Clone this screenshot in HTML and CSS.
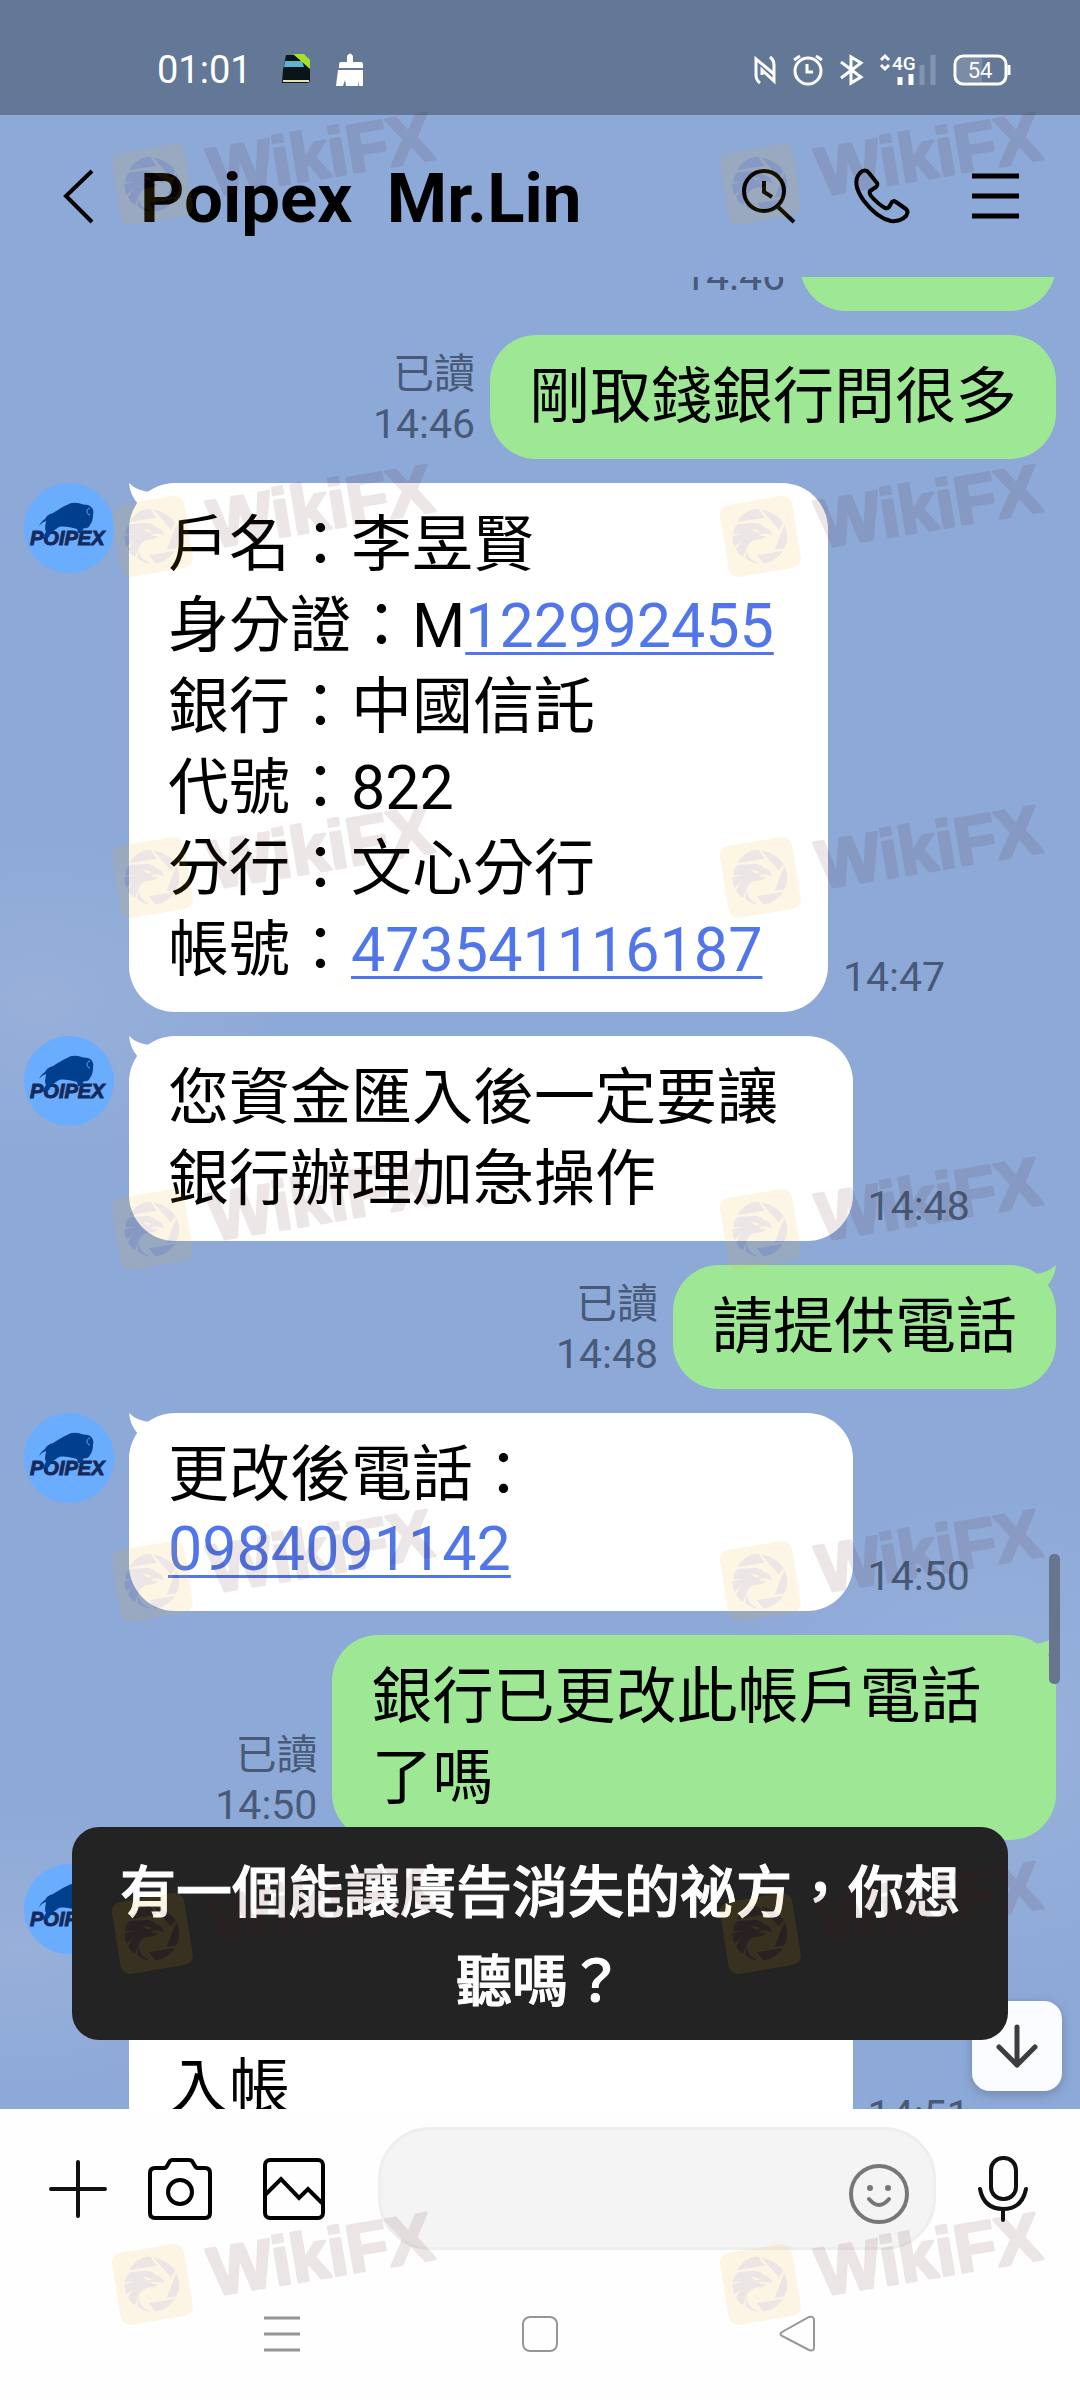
FILE: index.html
```html
<!DOCTYPE html>
<html lang="zh-Hant">
<head>
<meta charset="utf-8">
<meta name="viewport" content="width=device-width, initial-scale=1">
<title>Poipex Mr.Lin</title>
<link rel="stylesheet" href="styles.css">
</head>
<body>
<svg class="defs" aria-hidden="true">
  <defs>
    <symbol id="avatar" viewBox="0 0 90 90">
      <circle cx="45" cy="45" r="45" fill="#6aadff"/>
      <text x="6" y="62" class="avatar-name">POIPEX</text>
      <path fill="#003f8d" d="M15 43C17 39 19 37 21 36C23 32 26 31 29 30C34 27 38 24 43 22Q47 19 54 20Q60 22 64 22C69 24 70 28 69 32Q69 38 66 42Q64 46 60 45Q58 47 59 50L54 50L53 46C46 44 40 43 35 44C32 46 29 48 27 50L25 54L18 56L22 49C20 45 22 41 22 38Q18 39 15 43Z"/>
      <path fill="none" stroke="#6aadff" stroke-width="1" d="M66 25C62 26 62 31 66 32"/>
    </symbol>
    <symbol id="tail" viewBox="0 0 26 26">
      <path d="M0 0Q8 8 21 9L26 26L9 21Q1 12 0 0Z" fill="currentColor"/>
    </symbol>
    <g id="mark">
      <g transform="scale(.3444 .3333)">
        <path d="M353 517L507 490L532 650L378 677Z" fill="#faaf05" stroke="#faaf05" stroke-width="56" stroke-linejoin="round"/>
        <g fill="#501914">
          <path d="M375 541C390 512 420 498 437 501L455 527Z"/>
          <path d="M445 502C475 508 500 526 509 543L497 563Z"/>
          <path d="M512 548C525 575 522 602 511 620L484 623Z"/>
          <path d="M433 640L508 626C495 648 472 663 450 664Z"/>
          <path d="M364 577C364 562 370 550 380 546L425 542C440 543 447 548 451 554C466 557 476 568 476 580C462 573 455 577 445 575L438 579C446 582 454 582 459 583L447 592C425 590 405 602 402 622C404 645 422 660 440 665C423 664 410 658 399 648L402 618L392 646C382 640 376 632 372 622L386 598L367 614C362 600 361 590 362 582L390 576Z"/>
        </g>
        <path d="M417 560L440 566C434 574 424 571 417 560Z" fill="#faaf05"/>
      </g>
      <text transform="translate(213 206) rotate(-9.5)" class="mark-text">WikiFX</text>
    </g>
  </defs>
</svg>

<div class="phone">
  <div class="status">
    <span class="clock">01:01</span>
    <svg class="note" width="30" height="32" viewBox="0 0 30 32" aria-hidden="true">
      <path d="M4 1H22L28 8V27L26 29H0L1 16Z" fill="#0b1519"/>
      <path d="M3 7H20L22 13H2Z" fill="#5ab4d2"/>
      <path d="M11 0H22L28 6V15Z" fill="#a4e02c"/>
      <path d="M1 27H27" stroke="#e9dfb8" stroke-width="2"/>
    </svg>
    <svg width="28" height="34" viewBox="0 0 28 34" aria-hidden="true">
      <path fill="#fff" d="M11 3Q14 -2 17 3V9H25Q27 9 27 12V15H3V11Q3 9 5 9H11ZM2 17H27V33H23L22 28V33H10L9 27L7 33H0Z"/>
    </svg>
    <div class="status-right">
      <svg width="22" height="30" viewBox="0 0 22 30" fill="none" stroke="#fff" stroke-width="3" aria-hidden="true"><path d="M6 28Q2 25 2 20V4L20 19M16 2Q20 5 20 10V26L8 15V20"/></svg>
      <svg width="30" height="32" viewBox="0 0 30 32" fill="none" stroke="#fff" stroke-width="3" aria-hidden="true"><circle cx="15" cy="17" r="13"/><path d="M1 6L7 2M23 2L29 6M14 10V18H20"/></svg>
      <svg width="23" height="30" viewBox="0 0 23 30" fill="none" stroke="#fff" stroke-width="3" aria-hidden="true"><path d="M1 7L21 22L11 28V2L21 8L1 23"/></svg>
      <svg width="56" height="32" viewBox="0 0 56 32" aria-hidden="true">
        <path d="M1 6L5 2L9 6M1 11L5 15L9 11" fill="none" stroke="#fff" stroke-width="3"/>
        <text x="12" y="16" class="net">4G</text>
        <path d="M20 23V31M31 20V31" stroke="#fff" stroke-width="5"/>
        <path d="M42 11V31M53 1V31" stroke="#8495b0" stroke-width="5"/>
      </svg>
      <svg width="58" height="32" viewBox="0 0 58 32" aria-hidden="true">
        <rect x="4" y="4" width="25" height="24" fill="#7b8ca7"/>
        <rect x="2" y="2" width="51" height="28" rx="8" fill="none" stroke="#fff" stroke-width="3"/>
        <path d="M56 11V21" stroke="#fff" stroke-width="3"/>
        <text x="27" y="24" text-anchor="middle" class="charge">54</text>
      </svg>
    </div>
  </div>

  <header class="header">
    <button class="back" aria-label="返回"><svg width="60" height="60" viewBox="0 0 60 60" fill="none" stroke="#000" stroke-width="4"><path d="M44 5L18 30L44 56"/></svg></button>
    <h1 class="title">Poipex&nbsp; Mr.Lin</h1>
    <button aria-label="搜尋"><svg width="60" height="60" viewBox="0 0 60 60" fill="none" stroke="#000" stroke-width="4"><circle cx="26" cy="25" r="20"/><path d="M39 40L56 56M26 15V26L34 31"/></svg></button>
    <button aria-label="通話"><svg width="60" height="60" viewBox="0 0 60 60" fill="none" stroke="#000" stroke-width="4" stroke-linejoin="round"><path d="M8 7Q13 2 17 7L25 17Q26 19 24 21L18 25Q17 27 19 30Q26 38 33 42Q35 43 37 41L40 36Q42 34 44 36L54 43Q57 46 54 50Q48 56 39 55Q25 52 12 35Q-1 17 8 7Z"/></svg></button>
    <button aria-label="選單"><svg width="60" height="60" viewBox="0 0 60 60" stroke="#000" stroke-width="5"><path d="M6 10H53M6 30H53M6 50H53"/></svg></button>
  </header>

  <main class="chat">
    <div class="messages">
      <div class="msg sent">
        <div class="bubble stub"></div>
        <div class="meta"><time>14:46</time></div>
      </div>
      <div class="msg sent">
        <div class="bubble">剛取錢銀行問很多</div>
        <div class="meta"><span>已讀</span><time>14:46</time></div>
      </div>
      <div class="msg">
        <svg class="avatar" role="img" aria-label="Poipex"><use href="#avatar"/></svg>
        <div class="bubble"><svg class="tail" aria-hidden="true"><use href="#tail"/></svg>戶名：李昱賢<br>身分證：M<a href="tel:122992455">122992455</a>&nbsp;<br>銀行：中國信託<br>代號：822<br>分行：文心分行<br>帳號：<a href="tel:473541116187">473541116187</a></div>
        <div class="meta"><time>14:47</time></div>
      </div>
      <div class="msg">
        <svg class="avatar" role="img" aria-label="Poipex"><use href="#avatar"/></svg>
        <div class="bubble"><svg class="tail" aria-hidden="true"><use href="#tail"/></svg>您資金匯入後一定要讓銀行辦理加急操作</div>
        <div class="meta"><time>14:48</time></div>
      </div>
      <div class="msg sent">
        <div class="bubble"><svg class="tail" aria-hidden="true"><use href="#tail"/></svg>請提供電話</div>
        <div class="meta"><span>已讀</span><time>14:48</time></div>
      </div>
      <div class="msg">
        <svg class="avatar" role="img" aria-label="Poipex"><use href="#avatar"/></svg>
        <div class="bubble wide"><svg class="tail" aria-hidden="true"><use href="#tail"/></svg>更改後電話：<div class="number"><a href="tel:0984091142">0984091142</a></div></div>
        <div class="meta"><time>14:50</time></div>
      </div>
      <div class="msg sent">
        <div class="bubble"><svg class="tail" aria-hidden="true"><use href="#tail"/></svg>銀行已更改此帳戶電話了嗎</div>
        <div class="meta"><span>已讀</span><time>14:50</time></div>
      </div>
      <div class="msg">
        <svg class="avatar" role="img" aria-label="Poipex"><use href="#avatar"/></svg>
        <div class="bubble wide"><br><br>入帳</div>
        <div class="meta"><time>14:51</time></div>
      </div>
    </div>
    <div class="scrollbar"></div>
    <button class="jump" aria-label="跳至最新訊息"><svg width="60" height="60" viewBox="0 0 60 60" fill="none" stroke="#3d3d3d" stroke-width="5" stroke-linecap="round" stroke-linejoin="round"><path d="M30 11V49M12 31L30 49L48 31"/></svg></button>
    <div class="toast" role="status">有一個能讓廣告消失的祕方，你想聽嗎？</div>
  </main>

  <form class="composer">
    <button type="button" aria-label="更多"><svg width="72" height="72" viewBox="0 0 72 72" stroke="#111" stroke-width="4" stroke-linecap="round"><path d="M9 36H63M36 9V63"/></svg></button>
    <button type="button" aria-label="相機"><svg width="72" height="72" viewBox="0 0 72 72" fill="none" stroke="#000" stroke-width="4"><path d="M5 15H14Q16 15 17 13L20 8Q21 7 22 7H39Q41 7 42 8L45 13Q46 15 48 15H55Q60 15 60 20V60Q60 65 55 65H5Q0 65 0 60V20Q0 15 5 15Z"/><circle cx="30" cy="39" r="12"/></svg></button>
    <button type="button" aria-label="相片"><svg width="72" height="72" viewBox="0 0 72 72" fill="none" stroke="#000" stroke-width="4"><rect x="7" y="7" width="58" height="58" rx="5"/><path d="M7 42L23 26L41 45L50 36L65 51"/></svg></button>
    <div class="field">
      <input type="text" aria-label="輸入訊息">
      <button type="button" aria-label="貼圖"><svg width="60" height="72" viewBox="0 0 60 72"><circle cx="30" cy="41" r="28" fill="none" stroke="#777" stroke-width="4"/><circle cx="21" cy="35" r="3" fill="#777"/><circle cx="39" cy="35" r="3" fill="#777"/><path d="M20 46Q30 58 40 46" fill="none" stroke="#777" stroke-width="4" stroke-linecap="round"/></svg></button>
    </div>
    <button type="button" aria-label="語音"><svg width="72" height="72" viewBox="0 0 72 72" fill="none" stroke="#111" stroke-width="4" stroke-linecap="round"><rect x="23" y="5" width="25" height="41" rx="12"/><path d="M12 36Q16 56 35 56Q54 56 58 36M35 56V67"/></svg></button>
  </form>

  <nav class="nav">
    <button aria-label="最近"><svg width="60" height="60" viewBox="0 0 60 60" stroke="#969696" stroke-width="3"><path d="M12 14H48M12 30H48M12 46H48"/></svg></button>
    <button aria-label="主畫面"><svg width="60" height="60" viewBox="0 0 60 60" fill="none" stroke="#969696" stroke-width="2"><rect x="13" y="13" width="34" height="34" rx="7"/></svg></button>
    <button aria-label="返回上一頁"><svg width="60" height="60" viewBox="0 0 60 60" fill="none" stroke="#969696" stroke-width="2"><path d="M14 28L41 13Q46 12 46 16V43Q46 48 41 46L14 32Q11 30 14 28Z"/></svg></button>
  </nav>

  <svg class="marks" viewBox="0 0 1080 2400" preserveAspectRatio="xMinYMin meet" aria-hidden="true">
    <use href="#mark" y="-10"/><use href="#mark" x="608" y="-10"/>
    <use href="#mark" y="342"/><use href="#mark" x="608" y="342"/>
    <use href="#mark" y="683"/><use href="#mark" x="608" y="683"/>
    <use href="#mark" y="1035"/><use href="#mark" x="608" y="1035"/>
    <use href="#mark" y="1387"/><use href="#mark" x="608" y="1387"/>
    <use href="#mark" y="1739"/><use href="#mark" x="608" y="1739"/>
    <use href="#mark" y="2090"/><use href="#mark" x="608" y="2090"/>
  </svg>
</div>
</body>
</html>
```
FILE: styles.css
```css
* { box-sizing: border-box; }

body {
  margin: 0;
  font-family: Roboto, "Noto Sans CJK TC", sans-serif;
  color: #000;
  background: #fefefe;
}

button {
  flex: none;
  padding: 0;
  border: 0;
  background: none;
}

svg { display: block; flex: none; overflow: visible; }

.defs { position: absolute; width: 0; height: 0; }

.phone {
  position: relative;
  display: flex;
  flex-direction: column;
  height: 100vh;
  overflow: hidden;
}

/* System status bar */
.status {
  display: flex;
  align-items: center;
  flex: none;
  height: 115px;
  padding: 24px 69px 0 157px;
  background: #637796;
}

.clock { font-size: 38px; color: #fff; }
.note { margin: 0 24px 0 30px; }

.status-right {
  display: flex;
  align-items: center;
  gap: 17px;
  margin-left: auto;
}

.net { font-size: 19px; font-weight: 500; fill: #fff; }
.charge { font-size: 22px; fill: #fff; }

/* Conversation header */
.header {
  display: flex;
  align-items: center;
  flex: none;
  gap: 54px;
  height: 162px;
  padding: 0 54px 0 48px;
  background: #8da9d7;
}

.back { margin-right: -22px; }

.title {
  flex: 1;
  margin: 0;
  padding-top: 6px;
  font-size: 69px;
  font-weight: 700;
  line-height: 80px;
  white-space: nowrap;
}

/* Conversation */
.chat {
  position: relative;
  flex: 1;
  min-height: 0;
  overflow: hidden;
  background:
    radial-gradient(ellipse 260px 170px at 40px 720px, #98b0da, #98b0da00),
    radial-gradient(ellipse 240px 150px at 20px 1670px, #98b0da, #98b0da00),
    radial-gradient(ellipse 300px 260px at 1000px 1460px, #98b1dc, #98b1dc00),
    #8da9d7;
}

.messages {
  display: flex;
  flex-direction: column;
  gap: 24px;
  margin-top: -90px;
  padding: 0 24px;
}

.msg { display: flex; align-items: flex-start; gap: 15px; }
.sent { flex-direction: row-reverse; }

.avatar { width: 90px; height: 90px; }
.avatar-name {
  font: italic 700 20px "Liberation Sans", sans-serif;
  fill: #142a5c;
  stroke: #142a5c;
  stroke-width: 1px;
}

.bubble {
  position: relative;
  max-width: 67vw;
  padding: 22px 39px 21px;
  border-radius: 46px;
  background: #fff;
  font-size: 61px;
  line-height: 81px;
}

.wide { width: 67vw; }
.stub { width: 256px; height: 124px; }
.sent .bubble { background: #9ee895; }

.tail {
  position: absolute;
  top: 0;
  left: 0;
  width: 26px;
  height: 26px;
  color: #fff;
}

.sent .tail {
  right: 0;
  left: auto;
  color: #9ee895;
  transform: scaleX(-1);
}

.bubble a {
  color: #5076ea;
  text-decoration-thickness: 3px;
  text-underline-offset: 5px;
  text-decoration-skip-ink: none;
}

/* Digits-only lines sit closer to the line above */
.number { margin-top: -7px; }

.meta {
  display: flex;
  flex-direction: column;
  align-self: flex-end;
  padding-bottom: 10px;
  color: #485a77;
  font-size: 41px;
  line-height: 50px;
}

.sent .meta { text-align: right; }

.scrollbar {
  position: absolute;
  top: 1277px;
  right: 20px;
  width: 11px;
  height: 130px;
  border-radius: 5px;
  background: #69748f;
}

.jump {
  position: absolute;
  right: 18px;
  bottom: 18px;
  display: grid;
  place-items: center;
  width: 90px;
  height: 90px;
  border-radius: 18px;
  background: #fafcff;
  box-shadow: 0 3px 12px #0003;
}

.toast {
  position: absolute;
  right: 72px;
  bottom: 69px;
  left: 72px;
  padding: 22px 44px 13px;
  border-radius: 27px;
  background: #232323;
  color: #fff;
  font-size: 56px;
  font-weight: 500;
  line-height: 89px;
  text-align: center;
  -webkit-text-stroke: 1px #fff;
}

/* Message composer */
.composer {
  display: flex;
  align-items: center;
  flex: none;
  gap: 36px;
  padding: 18px 40px 18px 42px;
}

.field {
  display: flex;
  align-items: center;
  flex: 1;
  min-width: 0;
  height: 123px;
  margin: 0 -4px 0 12px;
  padding-right: 24px;
  border: 3px solid #eee;
  border-radius: 52px;
  background: #f4f4f4;
}

.field input {
  flex: 1;
  min-width: 0;
  height: 100%;
  padding: 0 0 0 36px;
  border: 0;
  outline: 0;
  background: none;
  font: inherit;
  font-size: 56px;
}

/* System navigation */
.nav {
  display: flex;
  align-items: center;
  justify-content: center;
  flex: none;
  gap: 198px;
  height: 132px;
}

/* Watermark laid over the whole screen */
.marks {
  position: absolute;
  inset: 0;
  width: 100%;
  height: 100%;
  opacity: .1;
  pointer-events: none;
}

.mark-text {
  font: 700 68px "Liberation Sans", sans-serif;
  fill: #501914;
  stroke: #501914;
  stroke-width: 3px;
  stroke-linejoin: round;
}
```
